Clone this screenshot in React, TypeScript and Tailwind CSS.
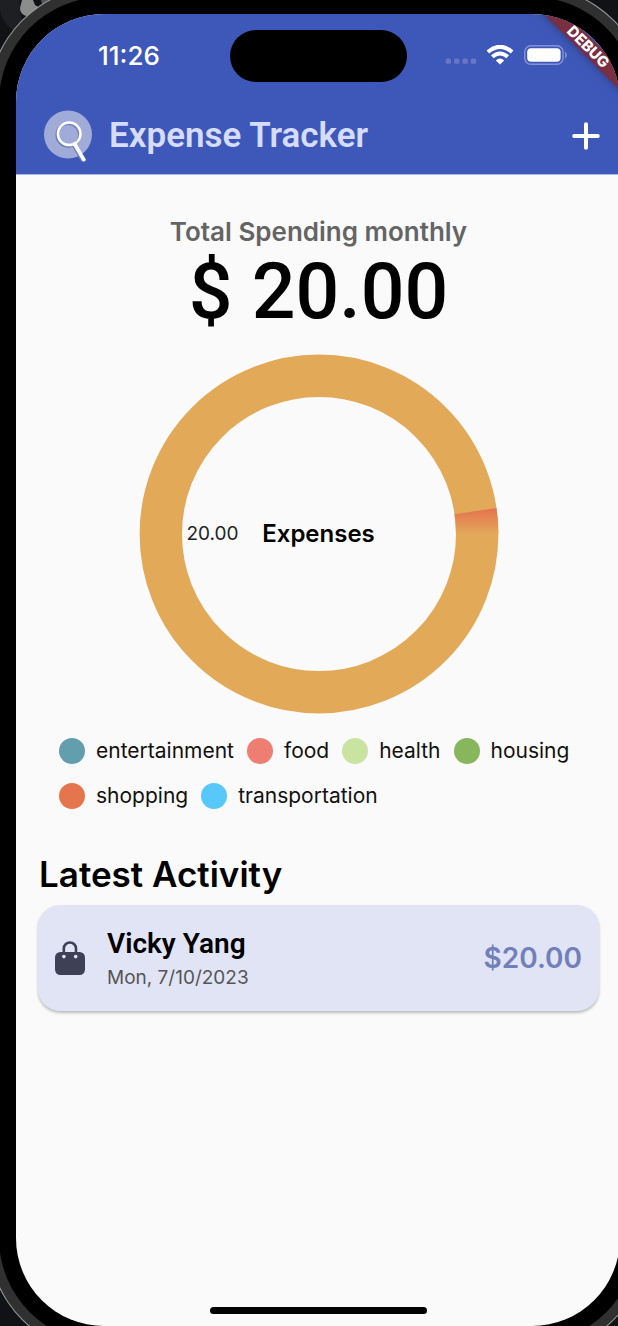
const categories = [
  { name: "entertainment", dot: "bg-[#629eae]" },
  { name: "food", dot: "bg-[#ee7d72]" },
  { name: "health", dot: "bg-[#c9e4a0]" },
  { name: "housing", dot: "bg-[#87b65c]" },
  { name: "shopping", dot: "bg-[#e5754c]" },
  { name: "transportation", dot: "bg-[#58c7fa]" },
];

function SignalDots() {
  return (
    <svg className="mt-3 h-[6px] w-8" viewBox="0 0 32 6" aria-hidden="true">
      {[0, 8.4, 16.8, 25.2].map((x) => (
        <rect key={x} x={x + 0.6} y="0.4" width="5.4" height="5.4" rx="1.6" fill="#6677c6" />
      ))}
    </svg>
  );
}

function WifiIcon() {
  return (
    <svg className="h-5 w-7" viewBox="0 0 28 20" aria-hidden="true">
      <g fill="none" stroke="#fff" strokeWidth="4">
        <path d="M1.9 7 Q14 -3.4 26.1 7" />
        <path d="M6.3 11.8 Q14 5.2 21.7 11.8" />
      </g>
      <path d="M9.8 15.4 Q14 11.8 18.2 15.4 L14 19.4 Z" fill="#fff" />
    </svg>
  );
}

function BatteryIcon() {
  return (
    <svg className="h-5 w-11" viewBox="0 0 44 20" aria-hidden="true">
      <rect x="0.8" y="0.7" width="38.2" height="18.6" rx="6" fill="none" stroke="#8592d3" strokeWidth="1.4" />
      <rect x="3.2" y="3.2" width="33.4" height="13.6" rx="4" fill="#fff" />
      <path d="M41.4 7 q2.2 3 0 6.2 z" fill="#8592d3" stroke="#8592d3" strokeWidth="0.8" />
    </svg>
  );
}

function SearchLogo() {
  return (
    <svg className="h-[52px] w-[50px]" viewBox="0 0 50 52" aria-hidden="true">
      <circle cx="25" cy="24.5" r="24" fill="#a1abd8" />
      <g fill="none" strokeLinecap="round">
        <circle cx="25.2" cy="25" r="11.4" stroke="#7480b5" strokeWidth="2.8" />
        <path d="M30.6 35.4 L39.2 50" stroke="#7480b5" strokeWidth="3.4" />
        <circle cx="26.2" cy="23.8" r="11.3" stroke="#fff" strokeWidth="2.5" />
        <path d="M31.6 34 L40.8 49.6" stroke="#fff" strokeWidth="3.8" />
      </g>
    </svg>
  );
}

function BagIcon() {
  return (
    <svg className="h-[34px] w-[30px]" viewBox="0 0 30 34" aria-hidden="true">
      <path d="M8.8 16 V7.6 a6.1 6.1 0 0 1 12.2 0 V16" fill="none" stroke="#3e4155" strokeWidth="2.6" />
      <rect x="0" y="11" width="30" height="23" rx="5.4" fill="#3e4155" />
      <circle cx="8.9" cy="15.6" r="1.8" fill="#e1e4f5" />
      <circle cx="20.7" cy="15.6" r="1.8" fill="#e1e4f5" />
    </svg>
  );
}

function ExpenseChart() {
  return (
    <div className="mt-5 grid w-[360px] place-items-center self-center">
      <svg className="col-start-1 row-start-1 w-full" viewBox="0 0 360 360" aria-hidden="true">
        <defs>
          <linearGradient id="slice" gradientUnits="userSpaceOnUse" x1="0" y1="156" x2="0" y2="180">
            <stop offset="0" stopColor="#e5754f" />
            <stop offset="1" stopColor="#e2a959" />
          </linearGradient>
        </defs>
        <circle cx="180" cy="180" r="158.2" fill="none" stroke="#e2a959" strokeWidth="42.4" />
        <path
          d="M357.5 154 A179.4 179.4 0 0 1 359.4 180 L317 180 A137 137 0 0 0 315.5 160.2 Z"
          fill="url(#slice)"
        />
      </svg>
      <span className="col-start-1 row-start-1 ml-12 justify-self-start text-[19px] text-[#222]">20.00</span>
      <span className="col-start-1 row-start-1 text-[24px] font-semibold">Expenses</span>
    </div>
  );
}

export default function App() {
  return (
    <div className="relative flex min-h-screen flex-col overflow-hidden bg-[#101215] pt-[14px] pl-4 font-['Inter','Liberation_Sans',sans-serif] text-black">
      <svg className="absolute top-0 left-0 h-9 w-16" viewBox="0 0 64 36" aria-hidden="true">
        <path d="M0 0 H20 Q18 20 30 30 L20 36 Q2 24 0 10 Z" fill="#1d1f22" />
        <path d="M22 0 H33 L35 5 L40 8 L33 14 L26 16 Q20 14 20 8 Z" fill="#8c8c8c" />
        <path d="M41 0 H52 L44 6 Q41 3 41 0 Z" fill="#55565a" />
      </svg>
      <div className="relative -mr-[2px] flex grow flex-col rounded-[88px] bg-[#fafafa] shadow-[0_0_0_17px_#000,0_0_0_27px_#303030,0_0_0_28px_#999]">
        <div className="relative flex grow flex-col overflow-hidden rounded-[88px]">
          <header className="border-b border-[#aab4e0] bg-[#3e58b9] text-white">
            <div className="grid grid-cols-[1fr_auto_1fr] items-center pt-4">
              <span className="pb-[2px] pl-[82px] text-[26px] font-medium">11:26</span>
              <span className="h-[52px] w-[177px] rounded-full bg-black" />
              <span className="flex items-center pb-[2px] pl-[38px]">
                <SignalDots />
                <span className="ml-[9px] flex items-center gap-[10px]">
                  <WifiIcon />
                  <BatteryIcon />
                </span>
              </span>
            </div>
            <div className="flex h-[92px] items-center pt-4 pr-5 pl-[27px]">
              <SearchLogo />
              <h1 className="ml-4 font-['Roboto',sans-serif] text-[35px] font-semibold text-[#d5dcff]">
                Expense Tracker
              </h1>
              <button type="button" aria-label="Add expense" className="ml-auto">
                <svg className="h-7 w-7" viewBox="0 0 28 28" fill="none" stroke="#fff" strokeWidth="4" strokeLinecap="round">
                  <path d="M14 2.2 V25.8 M2.2 14 H25.8" />
                </svg>
              </button>
            </div>
          </header>

          <main className="flex flex-col pt-[41px] pr-[21px] pl-[22px]">
            <h2 className="text-center text-[26px] leading-8 font-semibold text-[#646464]">Total Spending monthly</h2>
            <p className="mt-[2px] text-center font-['Roboto',sans-serif] text-[77px] leading-[84px] font-medium">$ 20.00</p>

            <ExpenseChart />

            <ul className="mt-[21px] flex flex-wrap gap-x-[13px] gap-y-[13px] pl-[21px] text-[21px] leading-8 text-[#111]">
              {categories.map((c) => (
                <li key={c.name} className="flex items-center gap-[11px]">
                  <span className={`h-[26px] w-[26px] rounded-full ${c.dot}`} />
                  {c.name}
                </li>
              ))}
            </ul>

            <h2 className="mt-10 pl-px text-[35px] leading-[44px] font-semibold">Latest Activity</h2>
            <article className="mt-[9px] flex h-[106px] items-center rounded-[22px] bg-[#e1e4f5] px-[17px] shadow-[0_2px_3px_rgba(0,0,0,0.25)]">
              <BagIcon />
              <div className="ml-[22px] pt-1">
                <h3 className="font-['Roboto',sans-serif] text-[28px] leading-9 font-semibold">Vicky Yang</h3>
                <p className="text-[19px] leading-8 text-[#555]">Mon, 7/10/2023</p>
              </div>
              <span className="ml-auto text-[28px] font-semibold text-[#727fba]">$20.00</span>
            </article>
          </main>

          <div className="mt-auto mb-3 h-[7px] w-[217px] self-center rounded-full bg-black" />

          <div className="absolute top-[25px] -right-12 flex h-4 w-40 rotate-45 items-center justify-center bg-[#7a2e42] text-[15px] font-extrabold text-white shadow-[0_0_9px_rgba(0,0,0,0.35)]">
            DEBUG
          </div>
        </div>
      </div>
    </div>
  );
}
